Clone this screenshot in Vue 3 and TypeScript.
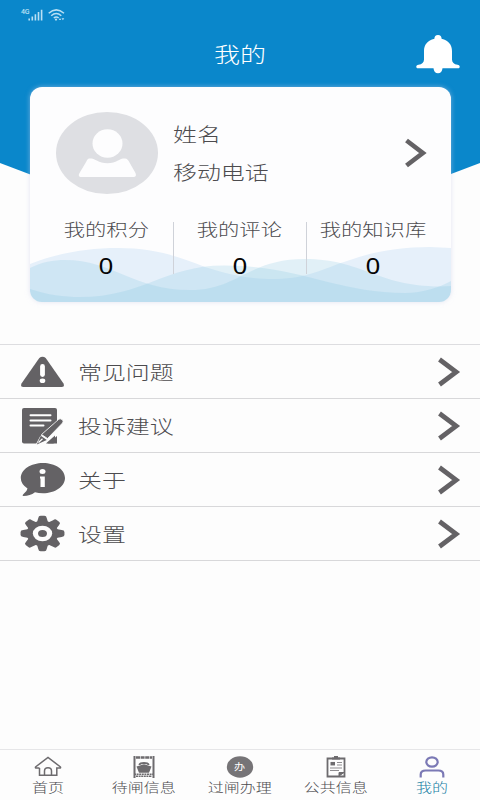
<script setup lang="ts">
interface Stat { label: string; value: number }
interface Entry { id: string; label: string }

const stats: Stat[] = [
  { label: '我的积分', value: 0 },
  { label: '我的评论', value: 0 },
  { label: '我的知识库', value: 0 },
]
const entries: Entry[] = [
  { id: 'faq', label: '常见问题' },
  { id: 'feedback', label: '投诉建议' },
  { id: 'about', label: '关于' },
  { id: 'settings', label: '设置' },
]
const tabs: Entry[] = [
  { id: 'home', label: '首页' },
  { id: 'waiting', label: '待闸信息' },
  { id: 'transit', label: '过闸办理' },
  { id: 'public', label: '公共信息' },
  { id: 'mine', label: '我的' },
]
const teeth: number[] = [0, 45, 90, 135, 180, 225, 270, 315]
</script>

<template>
  <div class="page">
    <div class="backdrop"></div>
    <div class="status">
      <span class="net">4G</span>
      <svg class="signal" width="15" height="12" viewBox="0 0 15 12">
        <path d="M1.2 9.5v2M4.3 7.5v4M7.4 5.3v6.2M10.5 3v8.5M13.6 .7v10.8" fill="none" stroke="#b9e0f4" stroke-width="1.6" />
      </svg>
      <svg class="wifi" width="17" height="12" viewBox="0 0 17 12">
        <path d="M.7 4.2Q8.2-2.4 16 4.2M3.2 6.7Q8.2 2.4 13.3 6.7M5.8 9Q8.2 6.9 10.7 9" fill="none" stroke="#b9e0f4" stroke-width="1.5" />
        <path d="M8 9.3l1.3 1.3L8 12 6.7 10.6zM10.800 11l1.200-2 1.200 2zM13.500 9.300h2.800l-1.400 2z" fill="#b9e0f4" />
      </svg>
    </div>
    <header class="header">
      <h1 class="title wide">我的</h1>
      <svg class="bell" width="44" height="39" viewBox="0 0 44 39">
        <path d="M22 0c2.500 0 3.600 1.500 3.600 3.700C32.500 5 36 10 36 16v8.500c0 3 2 4.800 5.500 5.200 3 .3 2.800 3.600.4 3.600H26.500C26.300 36.300 24.500 38.300 22 38.300s-4.300-2-4.500-5H2.100c-2.400 0-2.600-3.300.4-3.600C6 29.300 8 27.500 8 24.500V16c0-6 3.500-11 10.400-12.300C18.400 1.500 19.500 0 22 0z" fill="#fff" />
      </svg>
    </header>

    <section class="card">
      <svg class="waves" width="421" height="60" viewBox="30 242 421 60">
        <path d="M30 264C58 253 88 248 118 248C157 248 182 258 205 267C230 275 249 279 275 279C310 278 321 269 350 260C375 251 402 247 430 247L451 248V302H30z" fill="#e6f0fa" />
        <path class="veil" d="M30 268C42 262 53 260 65 260C113 260 133 290 190 290C238 290 248 259 305 259C362 259 376 286 440 286.500L451 286V302H30z" />
        <path class="veil" d="M30 289C48 295 64 297 80 297C144 297 165 265 225 265.500C300 266 337 293 405 293C423 293 440 287 451 281V302H30z" />
      </svg>
      <div class="profile">
        <svg class="avatar" width="102" height="82" viewBox="0 0 102 82">
          <ellipse cx="51" cy="41" rx="51" ry="41" fill="#dedfe3" />
          <ellipse cx="51.500" cy="31.500" rx="15" ry="14.300" fill="#fdfdfe" />
          <path d="M33 46.500h2.500c3 0 7 4.700 16 4.700s12.500-4.700 15.500-4.700h2c2 0 3.500 2 4.500 4L79.500 61c1 2.500.3 4-2 4H25.500c-2.500 0-3.500-1.500-2-4l6-10c1.200-2.300 2-4 3.500-4.500z" fill="#fdfdfe" />
        </svg>
        <div class="who">
          <span class="wide left">姓名</span>
          <span class="wide left">移动电话</span>
        </div>
        <svg class="chevron" width="23" height="30" viewBox="0 0 23 30">
          <path d="M1.500 2.500L17.800 15 1.500 27.500" fill="none" stroke="#646265" stroke-width="4.700" />
        </svg>
      </div>
      <div class="stats">
        <div v-for="s in stats" :key="s.label" class="stat">
          <span class="stat-label wide">{{ s.label }}</span>
          <span class="stat-value wide">{{ s.value }}</span>
        </div>
      </div>
    </section>

    <ul class="menu">
      <li v-for="e in entries" :key="e.id" class="item">
        <svg class="item-icon" width="46" height="38" viewBox="0 0 46 38" fill="#646265">
          <template v-if="e.id === 'faq'">
            <path d="M19.300 5Q22.500 2.500 25.700 5L43.500 30.500Q45 34 41.500 34H3.500Q0 34 1.500 30.500z" />
            <path d="M22.500 13.500v8" stroke="#fff" stroke-width="4.800" stroke-linecap="round" />
            <ellipse cx="22.500" cy="27.700" rx="2.800" ry="2.300" fill="#fff" />
          </template>
          <template v-else-if="e.id === 'feedback'">
            <path d="M4 1H35Q37 1 37 3V36.500H4Q2 36.500 2 34.500V3Q2 1 4 1z" />
            <path d="M10.500 8.300h20M10.500 13.500h20M10.500 18.500h13" stroke="#fff" stroke-width="2" stroke-linecap="round" />
            <path d="M33.500 17L20 29.500 15.500 38H26L37 29v9h9V17z" fill="#fdfdfd" />
            <path d="M38.500 12.500q1.500-1.500 3.500 0t.5 3.500L27.500 31.500 21.500 27.500z" stroke="#fdfdfd" stroke-width=".8" />
            <path d="M20.800 28.800l6 4.200-10 4.500z" />
            <path d="M27 35.500l8-7v6q0 2-2 2H26z" />
            <path d="M18.500 35.500l4-3.800" stroke="#fff" stroke-width="1.200" />
          </template>
          <template v-else-if="e.id === 'about'">
            <path d="M23 2C35 2 45 8.500 45 17S35 32.300 23 32.300q-4.500 0-8-1C11.500 34 8 35 3.500 35 2 35 2.500 33.700 4 32.500q3-2.200 3.500-5Q.8 23 .8 17C.8 8.500 11 2 23 2z" />
            <ellipse cx="22.500" cy="10.600" rx="3" ry="2.500" fill="#fff" />
            <path d="M20 15.500h4.800v10.500h-4.300v-8.500h-.5z" fill="#fff" />
          </template>
          <g v-else transform="translate(22.500 18.500) scale(1.240 1)">
            <path v-for="a in teeth" :key="a" :transform="`rotate(${a})`" d="M-4.500-11L-3.400-15.500Q-3.200-17.700-1.500-17.700H1.500Q3.200-17.700 3.400-15.500L4.500-11z" />
            <circle r="12.700" />
            <circle r="7.800" fill="#fdfdfd" />
            <circle r="3.600" />
          </g>
        </svg>
        <span class="item-label wide left">{{ e.label }}</span>
        <svg class="chevron" width="23" height="30" viewBox="0 0 23 30">
          <path d="M1.500 2.500L18.200 15 1.500 27.500" fill="none" stroke="#646265" stroke-width="4.700" />
        </svg>
      </li>
    </ul>

    <nav class="tabs">
      <a v-for="t in tabs" :key="t.id" class="tab" :class="{ active: t.id === 'mine' }">
        <svg width="28" height="22" viewBox="0 0 28 22" fill="none" stroke="#6d6b6e" stroke-width="1.500">
          <path v-if="t.id === 'home'" d="M5.500 12H1.800Q1 11.500 1.800 10.700L14 1.500l12.200 9.200q.8.800 0 1.300H22.800v7.300H5.500V12M10.500 19v-4q0-3.200 3.500-3.200t3.500 3.200v4" />
          <g v-else-if="t.id === 'waiting'">
            <path d="M4.500 0v22M23.500 0v22" stroke-width="2" />
            <path d="M6 1.500h16" stroke-width="2.500" stroke-dasharray="4 .6" />
            <path d="M9.500 9q0-2 4.500-2t4.500 2" stroke-width="2" />
            <path d="M7.500 11L14 9l6.500 2-2 5h-9z" fill="#6d6b6e" />
            <path d="M4 18.300h20M6 20.300h16" stroke-width="1.500" stroke-dasharray="2 .6" />
          </g>
          <ellipse v-else-if="t.id === 'transit'" cx="14" cy="11" rx="13.200" ry="10.700" fill="#767477" stroke="none" />
          <g v-else-if="t.id === 'public'">
            <path d="M5.500 2.500h17v18h-17z" stroke-width="1.800" />
            <path d="M10 2.500h8M12 .8h4" stroke-width="2.200" />
            <path d="M8.500 7.700h4.500" stroke-width="3.500" />
            <path d="M15 6.500h5M15 9h5M8 12h12M8 14.500h9" stroke-width="1" stroke="#8f8d90" />
            <path d="M17 20v-3.500h5z" fill="#6d6b6e" stroke-width="1" />
          </g>
          <g v-else stroke="#7b79b5" stroke-width="2.200">
            <ellipse cx="14" cy="6" rx="5.700" ry="4.700" />
            <path d="M2.700 21.500V18.500q0-4 5-4h12.600q5 0 5 4v3" />
          </g>
        </svg>
        <span v-if="t.id === 'transit'" class="mark wide">办</span>
        <span class="tab-label wide">{{ t.label }}</span>
      </a>
    </nav>
  </div>
</template>

<style>
body { margin: 0; background: #fdfdfd; }
</style>

<style scoped>
.page {
  position: relative;
  display: flex;
  flex-direction: column;
  width: 480px;
  height: 800px;
  overflow: hidden;
  background: #fdfdfd;
  color: #4c4b4e;
  font-family: "Noto Sans CJK SC", sans-serif;
  font-weight: 300;
}
.backdrop {
  position: absolute;
  inset: 0 0 auto;
  height: 260px;
  background: #0a87cb;
  clip-path: polygon(0 0, 100% 0, 100% 163px, 50% 254px, 0 163px);
}
.wide { display: inline-block; transform: scaleX(1.24); white-space: nowrap; }
.left { transform-origin: left center; }
.status {
  position: relative;
  display: flex;
  height: 31px;
  padding: 9px 0 0 21px;
  box-sizing: border-box;
}
.net { width: 7px; font: 500 7px/6px Roboto, sans-serif; letter-spacing: -.3px; color: #b9e0f4; }
.wifi { margin-left: 5px; }
.header {
  position: relative;
  display: grid;
  grid-template-columns: 1fr auto 1fr;
  align-items: center;
  height: 46px;
  flex: none;
}
.title { grid-column: 2; margin: -2px 0 0; color: #fff; font-size: 21px; font-weight: 300; line-height: 30px; }
.bell { justify-self: end; margin-right: 20px; }
.card {
  position: relative;
  flex: none;
  width: 421px;
  height: 215px;
  margin: 10px 0 0 30px;
  box-sizing: border-box;
  padding-top: 25px;
  border-radius: 12px;
  background: #fdfdfe;
  box-shadow: 0 0 5px rgba(205, 210, 235, .55);
}
.waves { position: absolute; left: 0; bottom: 0; border-radius: 0 0 12px 12px; }
.veil { fill: #7fc3de; fill-opacity: .22; }
.profile { display: flex; align-items: center; height: 82px; padding: 0 23px 0 26px; }
.who { display: flex; flex: 1; flex-direction: column; align-items: flex-start; padding: 0 0 0 15px; gap: 8px; font-size: 19.300px; line-height: 30px; }
.stats { position: relative; display: grid; grid-template-columns: repeat(3, 133.300px); margin: 28px 0 0 9.700px; }
.stat { display: flex; flex-direction: column; align-items: center; height: 52px; }
.stat + .stat { box-shadow: inset 1px 0 0 #cfd2d9; }
.stat-label { font-size: 17.200px; line-height: 20px; margin-top: -3px; }
.stat-value { margin-top: 13px; color: #050505; font-family: "Noto Sans", sans-serif; font-weight: 400; font-size: 21px; line-height: 28px; }
.menu { flex: none; margin: 42px 0 0; padding: 0; list-style: none; border-top: 1px solid #dddde0; }
.item { display: flex; align-items: center; height: 54px; box-sizing: border-box; border-bottom: 1px solid #d8d8da; padding: 0 19px 0 20px; }
.item-label { flex: 1; margin-left: 12px; font-size: 19.300px; line-height: 30px; }
.item-icon { flex: none; }
.tabs { display: grid; grid-template-columns: repeat(5, 1fr); margin-top: auto; height: 51px; box-sizing: border-box; border-top: 1px solid #e6e6e8; }
.tab { position: relative; display: flex; flex-direction: column; align-items: center; padding-top: 6px; }
.tab svg { flex: none; }
.tab-label { font-size: 12.900px; line-height: 18px; }
.active .tab-label { color: #197fa5; }
.mark { position: absolute; top: 10px; color: #fff; font-size: 9px; line-height: 14px; font-weight: 400; }
</style>
